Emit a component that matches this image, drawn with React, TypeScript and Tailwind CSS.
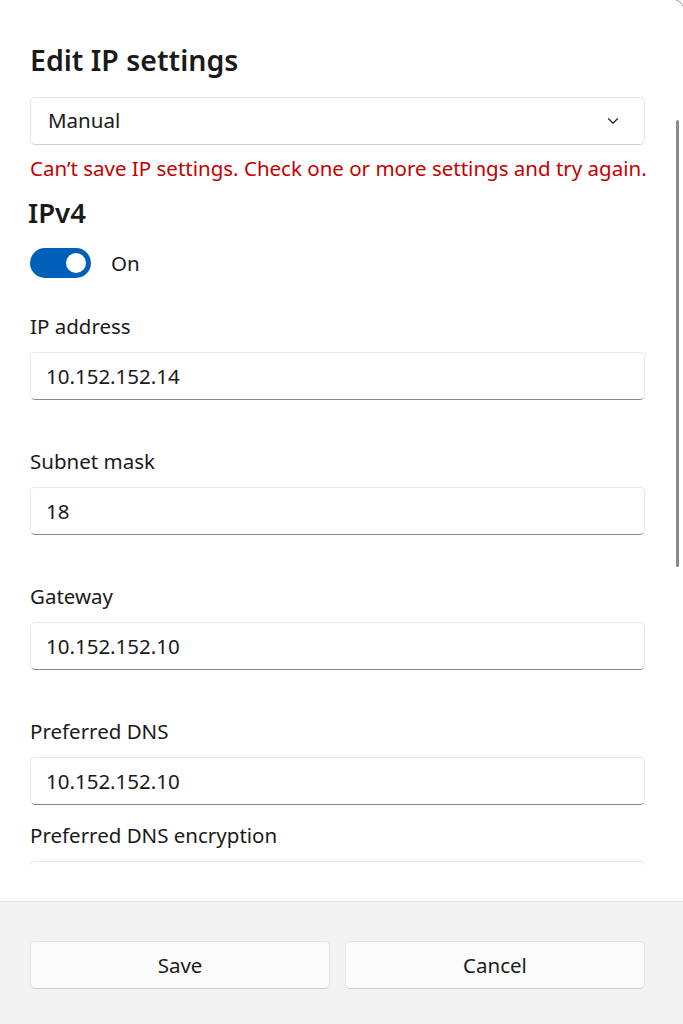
import { ChevronDown } from 'lucide-react';

const font = { fontFamily: '"Noto Sans", "Open Sans", sans-serif' };

interface FieldProps {
  label: string;
  value: string;
  gap: string;
}

const Field = ({ label, value, gap }: FieldProps) => (
  <div className={gap}>
    <div className="h-[24px] leading-[24px] text-[20.5px] text-[#1a1a1a]">{label}</div>
    <div className="mt-[14px] h-[48px] rounded-[5px] border border-[#e8e8e8] border-b-[#868686] bg-white px-[15px] flex items-center text-[20.5px] text-[#1a1a1a]">
      {value}
    </div>
  </div>
);

export default function App() {
  return (
    <div className="relative w-[683px] h-[1024px] bg-white overflow-hidden" style={font}>
      {/* scrollable area */}
      <div className="h-[865px] overflow-hidden px-[30px] pr-[38px] pt-[40px]">
        <h1 className="h-[40px] leading-[40px] text-[28.5px] font-semibold text-[#1a1a1a]">
          Edit IP settings
        </h1>

        <div className="mt-[17px] h-[48px] rounded-[5px] border border-[#e5e5e5] border-b-[#d0d0d0] bg-white pl-[17px] pr-[22px] flex items-center justify-between text-[20.5px] text-[#1a1a1a]">
          <span className="-mt-[2px]">Manual</span>
          <ChevronDown className="w-[18px] h-[18px] text-[#1a1a1a]" strokeWidth={1.5} />
        </div>

        <div className="mt-[11px] h-[24px] leading-[24px] text-[20.5px] text-[#c40000] whitespace-nowrap">
          Can’t save IP settings. Check one or more settings and try again.
        </div>

        <h2 className="mt-[17px] h-[32px] leading-[32px] text-[27.5px] font-semibold text-[#1a1a1a] -ml-[2px]">
          IPv4
        </h2>

        <div className="mt-[19px] h-[30px] flex items-center">
          <div className="w-[61px] h-[30px] rounded-full bg-[#005fb8] flex items-center justify-end pr-[5px]">
            <div className="w-[20px] h-[20px] rounded-full bg-white" />
          </div>
          <span className="ml-[20px] text-[20.5px] text-[#1a1a1a]">On</span>
        </div>

        <Field label="IP address" value="10.152.152.14" gap="mt-[36px]" />
        <Field label="Subnet mask" value="18" gap="mt-[49px]" />
        <Field label="Gateway" value="10.152.152.10" gap="mt-[49px]" />
        <Field label="Preferred DNS" value="10.152.152.10" gap="mt-[49px]" />
        <Field label="Preferred DNS encryption" value="" gap="mt-[18px]" />
      </div>

      {/* scrollbar thumb */}
      <div className="absolute left-[676px] top-[120px] w-[3px] h-[447px] rounded-full bg-[#8a8a8a]" />

      {/* window corner */}
      <svg className="absolute right-0 top-0" width="8" height="8" viewBox="0 0 8 8">
        <path d="M1 0 Q6 1 8 6" fill="none" stroke="#9a9a9a" strokeWidth="1" />
      </svg>

      {/* footer */}
      <div className="absolute left-0 right-0 top-[901px] bottom-0 border-t border-[#e5e5e5] bg-[#f3f3f3] px-[30px] pr-[38px] pt-[39px]">
        <div className="grid grid-cols-2 gap-[15px]">
          <button className="h-[48px] rounded-[5px] border border-[#e5e5e5] border-b-[#cccccc] bg-[#fbfbfb] text-[20.5px] text-[#1a1a1a]">
            Save
          </button>
          <button className="h-[48px] rounded-[5px] border border-[#e5e5e5] border-b-[#cccccc] bg-[#fbfbfb] text-[20.5px] text-[#1a1a1a]">
            Cancel
          </button>
        </div>
      </div>
    </div>
  );
}
